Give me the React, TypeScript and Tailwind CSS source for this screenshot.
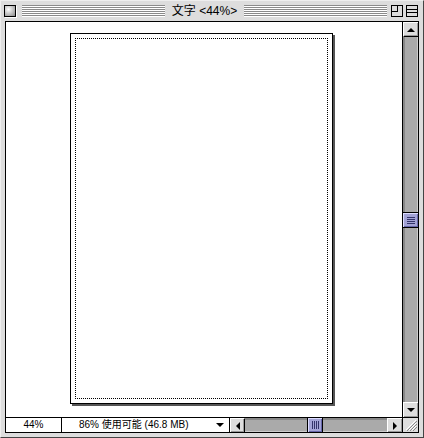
import React from "react";

const FONT = "font-['Liberation_Sans','Noto_Sans_CJK_JP',sans-serif]";
const STRIPES =
  "bg-[repeating-linear-gradient(to_bottom,#8a8a8a_0px,#8a8a8a_1px,#ffffff_1px,#ffffff_2px)]";

function Arrow({ dir }: { dir: "up" | "down" | "left" | "right" }) {
  const pts = {
    up: "1,6 9,6 5,2",
    down: "1,2 9,2 5,6",
    left: "6,1 6,9 2,5",
    right: "2,1 2,9 6,5",
  }[dir];
  const size = dir === "up" || dir === "down" ? "w-[10px] h-[8px]" : "w-[8px] h-[10px]";
  return (
    <svg viewBox={dir === "up" || dir === "down" ? "0 0 10 8" : "0 0 8 10"} className={size}>
      <polygon points={pts} fill="#000" />
    </svg>
  );
}

function ArrowBox({ dir, className }: { dir: "up" | "down" | "left" | "right"; className: string }) {
  return (
    <div
      className={`flex items-center justify-center bg-[#dddddd] border-t border-l border-t-white border-l-white shadow-[inset_-1px_-1px_0_#999] ${className}`}
    >
      <Arrow dir={dir} />
    </div>
  );
}

function VThumb() {
  return (
    <div className="h-[16px] w-full bg-[#a3a3d6] border-y border-black flex flex-col items-center justify-center gap-[1px] shadow-[inset_1px_1px_0_#ddddff,inset_-1px_-1px_0_#6666aa]">
      {[0, 1, 2, 3].map((i) => (
        <div key={i} className="h-[1px] w-[8px] bg-[#33336a]" />
      ))}
    </div>
  );
}

function HThumb() {
  return (
    <div className="w-[16px] h-full bg-[#a3a3d6] border-x border-black flex items-center justify-center gap-[1px] shadow-[inset_1px_1px_0_#ddddff,inset_-1px_-1px_0_#6666aa]">
      {[0, 1, 2, 3].map((i) => (
        <div key={i} className="w-[1px] h-[8px] bg-[#33336a]" />
      ))}
    </div>
  );
}

export default function App() {
  return (
    <div className={`w-[424px] h-[438px] bg-[#dddddd] ${FONT} relative`}>
      <div className="w-full h-full border border-[#eeeeee] border-r-[#444] border-b-[#444] flex flex-col">
        {/* title bar */}
        <div className="h-[20px] flex items-center pl-[3px] pr-[5px]">
          <div className="w-[12px] h-[12px] border border-black bg-[radial-gradient(circle_at_35%_35%,#ffffff,#888888)] shadow-[1px_1px_0_#fff]" />
          <div className={`ml-[6px] h-[12px] flex-1 ${STRIPES}`} />
          <div className="px-[7px] text-[12px] leading-none text-black whitespace-nowrap">文字 &lt;44%&gt;</div>
          <div className={`h-[12px] flex-1 ${STRIPES}`} />
          <div className="ml-[4px] w-[12px] h-[12px] border border-black bg-[#dddddd] relative">
            <div className="absolute left-0 top-0 w-[6px] h-[6px] border-r border-b border-black" />
          </div>
          <div className="ml-[3px] w-[12px] h-[12px] border border-black bg-[#dddddd] flex flex-col justify-center gap-[2px]">
            <div className="h-[1px] bg-black" />
            <div className="h-[1px] bg-black" />
          </div>
        </div>

        {/* content frame */}
        <div className="ml-[4px] mr-[4px] mb-[4px] flex-1 border border-black flex flex-col bg-white">
          <div className="flex-1 flex">
            <div className="flex-1 bg-white pl-[64px] pt-[11px]">
              <div className="w-[263px] h-[371px] border border-black bg-white p-[4px] shadow-[2px_2px_0_#555]">
                <div className="w-full h-full border border-dotted border-black" />
              </div>
            </div>
            {/* vertical scrollbar */}
            <div className="w-[16px] border-l border-black flex flex-col">
              <ArrowBox dir="up" className="h-[15px] border-b border-b-black" />
              <div className="flex-1 bg-[#aaaaaa] shadow-[inset_2px_0_0_#888,inset_-1px_0_0_#ccc] flex flex-col pt-[175px]">
                <VThumb />
              </div>
              <ArrowBox dir="down" className="h-[15px] border-t border-t-black" />
            </div>
          </div>

          {/* status bar */}
          <div className="h-[15px] border-t border-black flex text-[10px] leading-none bg-white">
            <div className="w-[56px] border-r border-black flex items-center justify-center">44%</div>
            <div className="w-[168px] border-r border-black flex items-center pl-[17px] pr-[4px]">
              <span className="flex-1">86% 使用可能 (46.8 MB)</span>
              <Arrow dir="down" />
            </div>
            <ArrowBox dir="left" className="w-[15px] border-r border-r-black" />
            <div className="flex-1 bg-[#aaaaaa] shadow-[inset_0_2px_0_#888,inset_0_-1px_0_#ccc] flex pl-[62px]">
              <HThumb />
            </div>
            <ArrowBox dir="right" className="w-[15px] border-l border-l-black" />
            <div className="w-[16px] border-l border-black bg-[#dddddd] flex items-center justify-center">
              <svg viewBox="0 0 14 14" className="w-[14px] h-[14px]">
                <g stroke="#888" strokeWidth="1">
                  <line x1="3" y1="13" x2="13" y2="3" />
                  <line x1="6" y1="13" x2="13" y2="6" />
                  <line x1="9" y1="13" x2="13" y2="9" />
                </g>
                <g stroke="#fff" strokeWidth="1">
                  <line x1="2" y1="12" x2="12" y2="2" />
                  <line x1="5" y1="12" x2="12" y2="5" />
                  <line x1="8" y1="12" x2="12" y2="8" />
                </g>
              </svg>
            </div>
          </div>
        </div>
      </div>
    </div>
  );
}
